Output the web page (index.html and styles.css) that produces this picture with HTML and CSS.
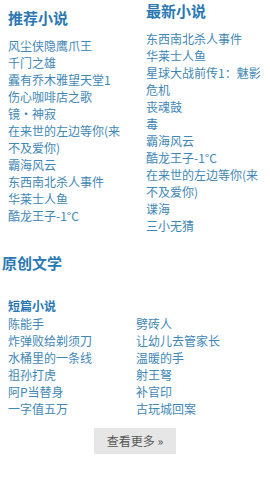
FILE: index.html
```html
<!DOCTYPE html>
<html lang="zh-CN">

<head>
  <meta charset="UTF-8">
  <meta name="viewport" content="width=device-width, initial-scale=1.0">
  <title>小说</title>

  <link rel="stylesheet" href="styles.css">
</head>

<body>
  <!-- 推荐 / 最新 -->
  <div class="top">
    <div class="box box_left">
      <h2>推荐小说</h2>
      <ul class="list">
        <li><a href="#">风尘侠隐鹰爪王</a></li>
        <li><a href="#">千门之雄</a></li>
        <li><a href="#">蠹有乔木雅望天堂1</a></li>
        <li><a href="#">伤心咖啡店之歌</a></li>
        <li><a href="#">镜·神寂</a></li>
        <li><a href="#">在来世的左边等你(来不及爱你)</a></li>
        <li><a href="#">霸海风云</a></li>
        <li><a href="#">东西南北杀人事件</a></li>
        <li><a href="#">华莱士人鱼</a></li>
        <li><a href="#">酷龙王子-1°C</a></li>
      </ul>
    </div>
    <div class="box box_right">
      <h2>最新小说</h2>
      <ul class="list">
        <li><a href="#">东西南北杀人事件</a></li>
        <li><a href="#">华莱士人鱼</a></li>
        <li><a href="#">星球大战前传1：魅影危机</a></li>
        <li><a href="#">丧魂鼓</a></li>
        <li><a href="#">毒</a></li>
        <li><a href="#">霸海风云</a></li>
        <li><a href="#">酷龙王子-1°C</a></li>
        <li><a href="#">在来世的左边等你(来不及爱你)</a></li>
        <li><a href="#">谍海</a></li>
        <li><a href="#">三小无猜</a></li>
      </ul>
    </div>
  </div>

  <!-- 原创文学 -->
  <h2 class="section_title">原创文学</h2>
  <div class="short">
    <h3>短篇小说</h3>
    <ul class="grid">
      <li><a href="#">陈能手</a></li>
      <li><a href="#">劈砖人</a></li>
      <li><a href="#">炸弹败给剃须刀</a></li>
      <li><a href="#">让幼儿去管家长</a></li>
      <li><a href="#">水桶里的一条线</a></li>
      <li><a href="#">温暖的手</a></li>
      <li><a href="#">祖孙打虎</a></li>
      <li><a href="#">射王弩</a></li>
      <li><a href="#">阿P当替身</a></li>
      <li><a href="#">补官印</a></li>
      <li><a href="#">一字值五万</a></li>
      <li><a href="#">古玩城回案</a></li>
    </ul>
  </div>

  <div class="more">
    <a href="#">查看更多 »</a>
  </div>
</body>

</html>
```

FILE: styles.css
```css
* {
  margin: 0;
  padding: 0;
  box-sizing: border-box;
}

body {
  width: 270px;
  font-family: "Noto Sans CJK SC", "Liberation Sans", sans-serif;
  font-size: 12px;
  background: #fff;
}

a {
  color: #3f87b6;
  text-decoration: none;
}

ul {
  list-style: none;
}

h2 {
  font-size: 15px;
  line-height: 20px;
  color: #2a78b2;
  font-weight: bold;
}

/* 推荐 / 最新 */
.top {
  display: flex;
  padding: 0 8px;
}

.box h2 {
  margin-bottom: 9px;
}

.box_left {
  width: 122px;
  margin-right: 22px;
  padding-top: 8px;
}

.box_right {
  width: 122px;
  padding-top: 1px;
}

.list li {
  line-height: 17px;
}

/* 原创文学 */
.section_title {
  margin: 19px 0 0 2px;
}

.short {
  padding: 24px 8px 0;
}

.short h3 {
  font-size: 12px;
  line-height: 17px;
  color: #2a78b2;
  margin-bottom: 1px;
}

.grid {
  display: grid;
  grid-template-columns: 128px 1fr;
}

.grid li {
  line-height: 17px;
}

/* 查看更多 */
.more {
  display: flex;
  justify-content: center;
  margin-top: 11px;
}

.more a {
  width: 82px;
  height: 26px;
  line-height: 26px;
  text-align: center;
  background: #e6e6e6;
  color: #555;
  font-size: 12px;
}
```
